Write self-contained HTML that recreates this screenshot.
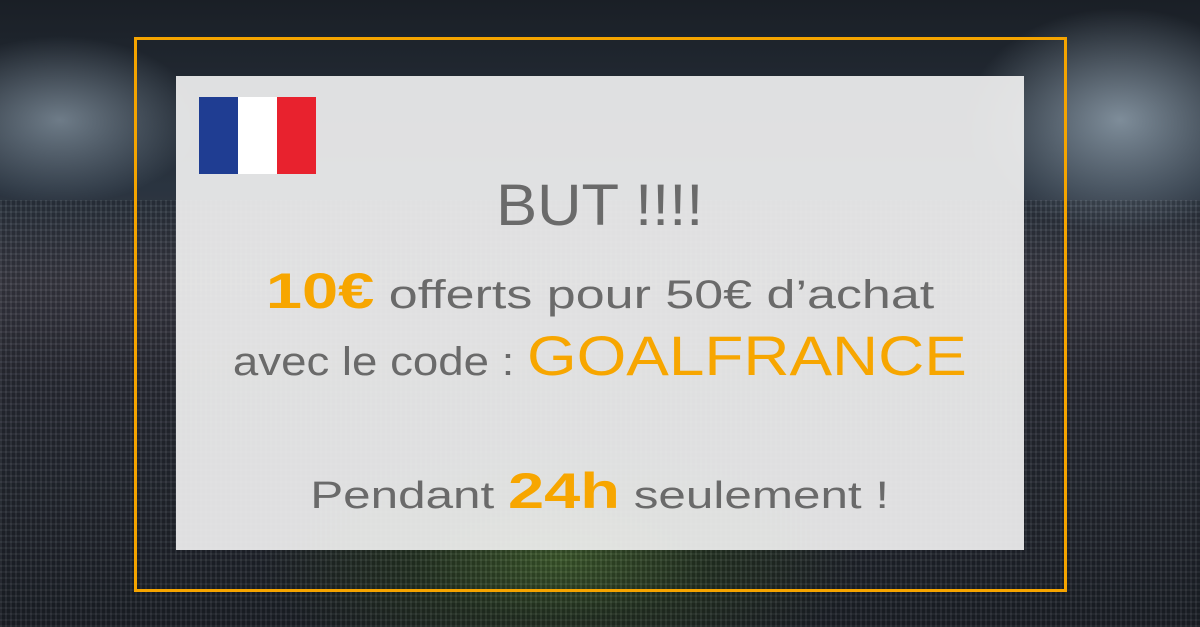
<!DOCTYPE html>
<html><head><meta charset="utf-8"><style>
html,body{margin:0;padding:0}
body{width:1200px;height:627px;overflow:hidden;position:relative;font-family:"Liberation Sans",sans-serif;
background:
radial-gradient(ellipse 300px 120px at 560px 560px,#3d5a2c 0%,rgba(40,60,30,0.6) 50%,rgba(0,0,0,0) 100%),
radial-gradient(ellipse 220px 160px at 1120px 120px,rgba(200,220,235,0.55) 0%,rgba(0,0,0,0) 70%),
radial-gradient(ellipse 200px 120px at 60px 120px,rgba(200,220,235,0.45) 0%,rgba(0,0,0,0) 70%),
linear-gradient(180deg,#1a1f26 0%,#2a3440 30%,#3a3a44 45%,#2a2c36 60%,#232830 80%,#1c2028 100%);}
.crowd{position:absolute;left:0;top:200px;width:1200px;height:427px;
background:repeating-linear-gradient(90deg,rgba(255,255,255,0.05) 0 2px,rgba(0,0,0,0.08) 2px 5px),
repeating-linear-gradient(0deg,rgba(255,255,255,0.04) 0 2px,rgba(0,0,0,0.1) 2px 6px);}
.frame{position:absolute;left:134px;top:37px;width:927px;height:549px;border:3px solid #f5a400;}
.box{position:absolute;left:176px;top:76px;width:848px;height:474px;background:rgba(240,240,240,0.92);}
.flag{position:absolute;left:199px;top:97px;width:117px;height:77px;display:flex}
.flag div{flex:1}
.t{position:absolute;left:176px;width:848px;text-align:center;color:#6a6a6a;white-space:nowrap}
.t>span.s{display:inline-block}
.o{color:#f7a600}
</style></head><body>
<div class="crowd"></div>
<div class="frame"></div>
<div class="box"></div>
<div class="flag"><div style="background:#1f3d92"></div><div style="background:#fff"></div><div style="background:#e8222e"></div></div>
<div class="t" style="top:172px;font-size:58px;"><span class="s" style="transform:scaleX(1.06)">BUT !!!!</span></div>
<div class="t" style="top:262px;font-size:40px;"><span class="s" style="transform:scaleX(1.3)"><span class="o" style="font-size:50px;font-weight:bold">10€</span> offerts pour 50€ d’achat</span></div>
<div class="t" style="top:323px;font-size:40px;"><span class="s" style="transform:scaleX(1.14)">avec le code : <span class="o" style="font-size:56px">GOALFRANCE</span></span></div>
<div class="t" style="top:462px;font-size:38px;"><span class="s" style="transform:scaleX(1.3)">Pendant <span class="o" style="font-size:50px;font-weight:bold">24h</span> seulement !</span></div>
</body></html>
